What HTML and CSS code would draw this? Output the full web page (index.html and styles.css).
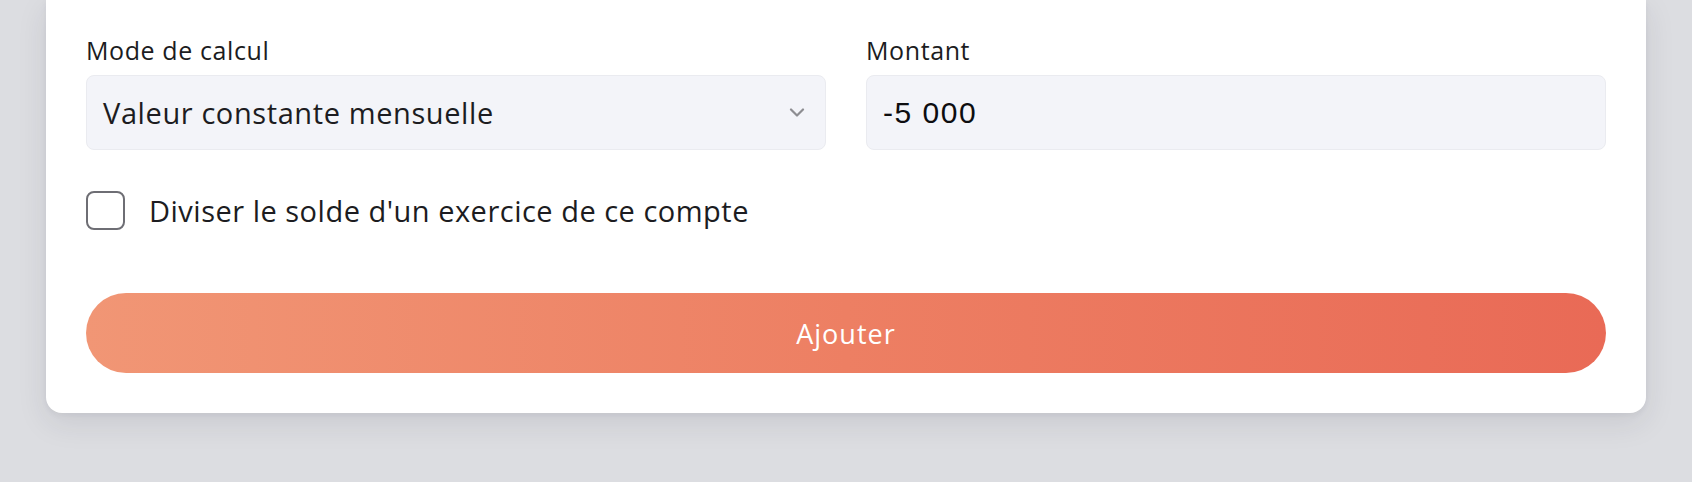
FILE: index.html
```html
<!DOCTYPE html>
<html lang="fr">
<head>
<meta charset="utf-8">
<title>Ajouter</title>
<link rel="stylesheet" href="styles.css">
</head>
<body>
<div class="card">
  <div class="row">
    <div class="field">
      <div class="label">Mode de calcul</div>
      <div class="control select">
        <span class="value">Valeur constante mensuelle</span>
        <svg class="chev" width="16" height="9" viewBox="0 0 16 9"><path d="M2 1.5 L8 7.5 L14 1.5" fill="none" stroke="#8d8d92" stroke-width="2.2" stroke-linecap="round" stroke-linejoin="round"/></svg>
      </div>
    </div>
    <div class="field">
      <div class="label">Montant</div>
      <div class="control input"><span class="num">-5 000</span></div>
    </div>
  </div>
  <div class="check">
    <span class="box"></span>
    <span class="check-text">Diviser le solde d'un exercice de ce compte</span>
  </div>
  <button class="btn">Ajouter</button>
</div>
</body>
</html>
```
FILE: styles.css
```css
html, body {
  margin: 0;
  padding: 0;
}
body {
  background: #dcdde1;
  font-family: "Open Sans", "Noto Sans", sans-serif;
  color: #1c1c21;
  height: 482px;
  overflow: hidden;
}
.card {
  margin: 0 46px;
  background: #ffffff;
  border-radius: 0 0 16px 16px;
  box-shadow: 0 10px 30px rgba(40, 40, 60, 0.10), 0 2px 6px rgba(40, 40, 60, 0.05);
  padding: 34px 40px 40px;
}
.row {
  display: grid;
  grid-template-columns: 1fr 1fr;
  gap: 40px;
}
.field {
  display: flex;
  flex-direction: column;
  gap: 9px;
}
.label {
  font-size: 25px;
  letter-spacing: 0.6px;
  line-height: 32px;
  color: #1c1c21;
}
.control {
  height: 75px;
  box-sizing: border-box;
  background: #f3f4f9;
  border: 1px solid #eaebf0;
  border-radius: 8px;
  display: flex;
  align-items: center;
  padding: 0 18px 0 16px;
}
.select {
  justify-content: space-between;
}
.value {
  font-size: 29px;
  letter-spacing: 0.6px;
  color: #1c1c21;
}
.chev {
  display: block;
  margin-right: 2px;
}
.num {
  font-family: "Liberation Sans", Arial, sans-serif;
  font-size: 30px;
  letter-spacing: 1.5px;
  color: #0d0d10;
}
.check {
  margin-top: 41px;
  display: flex;
  align-items: center;
  gap: 24px;
}
.box {
  width: 39px;
  height: 39px;
  box-sizing: border-box;
  border: 2px solid #6e6e74;
  border-radius: 8px;
  flex: none;
}
.check-text {
  font-size: 29px;
  letter-spacing: 0.5px;
  color: #1c1c21;
}
.btn {
  display: block;
  width: 100%;
  margin-top: 63px;
  height: 80px;
  border: none;
  border-radius: 40px;
  background: linear-gradient(90deg, #f19675 0%, #ed7f63 50%, #e96a56 100%);
  color: #ffffff;
  font-family: "Open Sans", "Noto Sans", sans-serif;
  font-size: 27px;
  letter-spacing: 1px;
  font-weight: 500;
  padding: 0;
}
```
